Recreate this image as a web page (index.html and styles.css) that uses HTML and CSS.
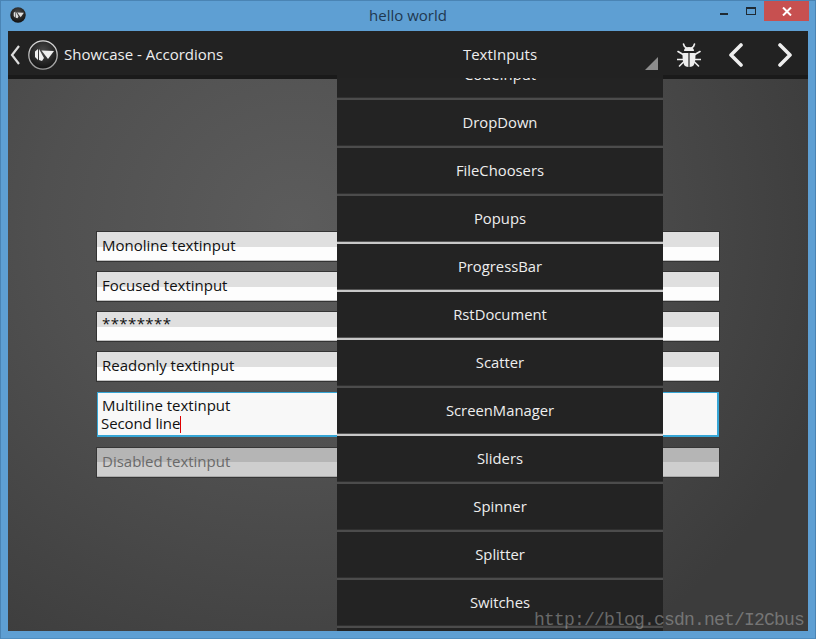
FILE: index.html
```
<!DOCTYPE html>
<html lang="en">
<head>
<meta charset="utf-8">
<title>hello world</title>
<link rel="stylesheet" href="styles.css">
</head>
<body>
<svg class="defs" width="0" height="0" aria-hidden="true">
  <defs>
    <radialGradient id="orb" cx="50%" cy="35%" r="65%">
      <stop offset="0" stop-color="#4a4a4a"/>
      <stop offset="1" stop-color="#111"/>
    </radialGradient>
    <linearGradient id="ring" x1="0" y1="0" x2="0" y2="1">
      <stop offset="0" stop-color="#ddd"/>
      <stop offset="1" stop-color="#999"/>
    </linearGradient>
  </defs>
</svg>
<div class="window">
  <div class="titlebar">
    <div class="title-left">
      <svg class="title-logo" width="16" height="16" viewBox="0 0 30 30">
        <circle cx="15" cy="15" r="14.5" fill="url(#orb)"/>
        <polygon points="7,11 10,8.5 10,20 7,17" fill="#ddd"/>
        <polygon points="11,9 16,18 14,21 11,20" fill="#ddd"/>
        <polygon points="13.5,10.5 26,11 20,19" fill="#ddd"/>
      </svg>
    </div>
    <div class="title-text">hello world</div>
    <div class="title-buttons">
      <span class="btn-min"></span>
      <span class="btn-max"></span>
      <span class="btn-close">
        <svg width="10" height="9" viewBox="0 0 10 9"><path d="M1 .5 9 8.5M9 .5 1 8.5" stroke="#fff" stroke-width="2"/></svg>
      </span>
    </div>
  </div>
  <div class="app">
    <header class="actionbar">
      <div class="bar-left">
        <svg class="back" width="12" height="22" viewBox="0 0 12 22"><path d="M10 2 3 11l7 9" fill="none" stroke="#ddd" stroke-width="2.2"/></svg>
        <svg class="logo" width="30" height="30" viewBox="0 0 30 30">
          <circle cx="15" cy="15" r="14.2" fill="url(#orb)" stroke="url(#ring)" stroke-width="1.3"/>
          <polygon points="7,11.5 10,9 10,20 7,17" fill="#eee"/>
          <polygon points="11,9 16,18 14,21 11,20" fill="#eee"/>
          <polygon points="13.5,10.5 26,11 20,19" fill="#eee"/>
        </svg>
        <span class="bar-title">Showcase - Accordions</span>
      </div>
      <div class="spinner">TextInputs<span class="spinner-arrow"></span></div>
      <div class="bar-right">
        <svg width="24" height="26" viewBox="0 0 24 26">
          <g stroke="#eee" stroke-width="1.6" fill="none" stroke-linecap="round">
            <path d="M1 9.5 7 13M.5 17.5H6M2.500 24l4-4M23 9.500 17 13M23.500 17.500H18M21.500 24l-4-4"/>
            <path d="M6.500 2q.5 3 3 4M17.500 2q-.5 3-3 4"/>
          </g>
          <path d="M7 9q0-4 5-4t5 4z" fill="#eee"/>
          <path d="M11.400 11H6.500q-1 0-1 2 0 7 2 10.500 1 1 3.900 1.500zM12.600 11h4.900q1 0 1 2 0 7-2 10.500-1 1-3.900 1.500z" fill="#eee"/>
        </svg>
        <svg width="16" height="24" viewBox="0 0 16 24"><path d="M13 2 3 12l10 10" fill="none" stroke="#eee" stroke-width="3.600" stroke-linecap="round" stroke-linejoin="round"/></svg>
        <svg class="chev-next" width="16" height="24" viewBox="0 0 16 24"><path d="M3 2l10 10L3 22" fill="none" stroke="#eee" stroke-width="3.600" stroke-linecap="round" stroke-linejoin="round"/></svg>
      </div>
    </header>
    <main class="form">
      <div class="field">Monoline textinput</div>
      <div class="field">Focused textinput</div>
      <div class="field field-password">********</div>
      <div class="field">Readonly textinput</div>
      <div class="field field-multi">Multiline textinput<br><span class="second-line">Second line</span><span class="caret"></span></div>
      <div class="field field-disabled">Disabled textinput</div>
    </main>
    <div class="dropdown">
      <div class="dropdown-list">
        <div class="item">CodeInput</div>
        <div class="item">DropDown</div>
        <div class="item">FileChoosers</div>
        <div class="item lit">Popups</div>
        <div class="item lit">ProgressBar</div>
        <div class="item lit">RstDocument</div>
        <div class="item">Scatter</div>
        <div class="item lit">ScreenManager</div>
        <div class="item">Sliders</div>
        <div class="item">Spinner</div>
        <div class="item">Splitter</div>
        <div class="item">Switches</div>
        <div class="item">TabbedPanel</div>
      </div>
    </div>
    <div class="watermark">http://blog.csdn.net/I2Cbus</div>
  </div>
</div>
</body>
</html>
```
FILE: styles.css
```
* { box-sizing: border-box; }
html, body { margin: 0; padding: 0; }
body { width: 816px; height: 639px; overflow: hidden; background: #5e9fd3; }
.defs { position: absolute; }
.window {
  width: 816px;
  height: 639px;
  display: flex;
  flex-direction: column;
  background: #5e9fd3;
  border: 1px solid #4a84b4;
  border-bottom-color: #4f8dbf;
}
.titlebar {
  height: 30px;
  flex: none;
  display: grid;
  grid-template-columns: 1fr auto 1fr;
  align-items: start;
}
.title-left { padding: 6px 0 0 9px; display: flex; }
.title-text {
  font-family: "Open Sans", sans-serif;
  font-size: 15px;
  line-height: 20px;
  padding-top: 4px;
  color: #1f3850;
}
.title-buttons { display: flex; justify-content: flex-end; align-items: flex-start; padding-right: 6px; }
.btn-min { width: 8px; height: 2px; background: #1f2a33; margin-top: 12px; margin-right: 18px; }
.btn-max { width: 10px; height: 8px; border: 1px solid #1f2a33; border-top-width: 2px; margin-top: 6px; margin-right: 8px; }
.btn-close { width: 45px; height: 20px; background: #c75050; display: flex; align-items: center; justify-content: center; }
.app {
  flex: 1;
  margin: 0 7px 7px;
  position: relative;
  display: flex;
  flex-direction: column;
  background: radial-gradient(ellipse 560px 520px at 36% 32%, #5c5c5c 0%, #505050 45%, #3c3c3c 100%);
  font-family: "Open Sans", sans-serif;
  font-size: 15px;
}
.actionbar {
  height: 48px;
  flex: none;
  display: flex;
  align-items: center;
  background: #222;
  border-bottom: 4px solid #1a1a1a;
  color: #eee;
}
.bar-left { width: 329px; display: flex; align-items: center; padding-left: 1px; padding-top: 4px; }
.back { margin-right: 7px; }
.logo { margin-right: 6px; }
.bar-title { position: relative; top: -1px; }
.spinner {
  width: 326px;
  height: 44px;
  padding-top: 2px;
  position: relative;
  z-index: 3;
  display: flex;
  align-items: center;
  justify-content: center;
}
.spinner-arrow {
  position: absolute;
  right: 5px;
  bottom: 5px;
  width: 13px;
  height: 13px;
  background: #8c8c8c;
  clip-path: polygon(100% 0, 100% 100%, 0 100%);
}
.bar-right { flex: 1; display: flex; align-items: center; gap: 27px; padding: 4px 0 0 14px; }
.chev-next { margin-left: 6px; }
.form {
  flex: 1;
  display: flex;
  flex-direction: column;
  justify-content: center;
  gap: 9px;
  padding: 0 88px 1px;
  color: #111;
}
.field {
  height: 31px;
  padding: 3px 0 0 5px;
  line-height: 20px;
  border: 1px solid #333;
  box-shadow: inset 0 -1px 0 #c4c4c4;
  background: linear-gradient(#dfdfdf 0, #dfdfdf 15px, #fdfdfd 15px);
}
.field-password { padding-top: 1px; letter-spacing: .4px; }
.field-multi {
  height: 45px;
  margin: 1px;
  padding: 3px 0 0 4px;
  line-height: 18px;
  border: 2px solid #36a6d6;
  border-width: 1px 2px 2px 1px;
  box-shadow: none;
  background: #f8f8f8;
}
.second-line { margin-left: -1px; letter-spacing: -.1px; }
.field-disabled {
  color: #6a6a6a;
  border-color: #363636;
  box-shadow: inset 0 -1px 0 #aaa;
  background: linear-gradient(#b5b5b5 0, #b5b5b5 14px, #cecece 14px);
}
.caret {
  display: inline-block;
  width: 1px;
  height: 17px;
  background: #e00000;
  vertical-align: -4px;
}
.dropdown {
  position: absolute;
  left: 329px;
  top: 44px;
  width: 326px;
  bottom: 0;
  overflow: hidden;
  background: #232323;
  z-index: 2;
}
.dropdown::before {
  content: "";
  position: absolute;
  left: 0;
  right: 0;
  top: 0;
  height: 3px;
  background: #222;
  z-index: 1;
}
.dropdown-list { margin-top: -23px; }
.item {
  height: 48px;
  padding-bottom: 2px;
  display: flex;
  align-items: center;
  justify-content: center;
  color: #eee;
  font-size: 14.8px;
  background: #232323;
  border-bottom: 2px solid #4c4c4c;
  box-shadow: inset 0 -1px 0 #303030, 0 1px 0 #2e2e2e;
  position: relative;
}
.item.lit {
  border-bottom-color: #c8c8c8;
  box-shadow: inset 0 -1px 0 #555, 0 1px 0 #555;
}
.watermark {
  position: absolute;
  right: 4px;
  bottom: 1px;
  z-index: 4;
  font-family: "Liberation Mono", monospace;
  font-size: 18px;
  letter-spacing: -.8px;
  line-height: 20px;
  color: rgba(175, 175, 175, .5);
}
```
